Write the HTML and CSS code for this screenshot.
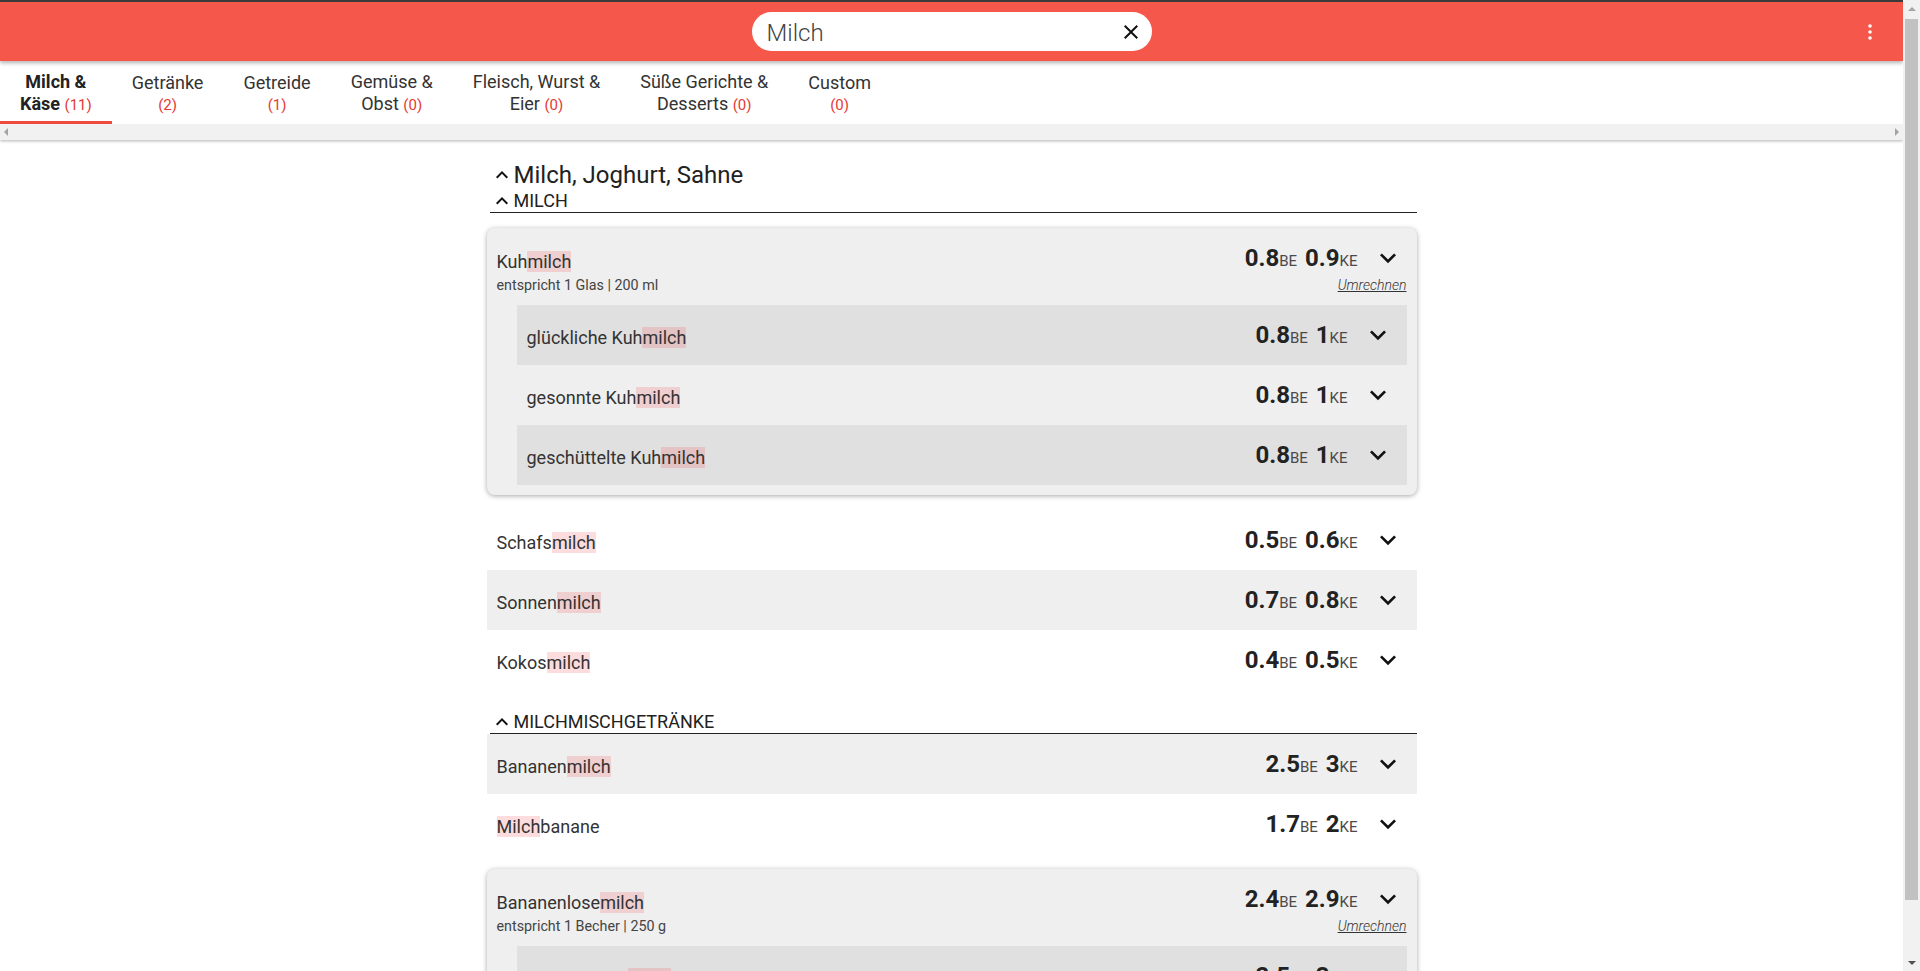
FILE: index.html
```html
<!DOCTYPE html>
<html lang="de">
<head>
<meta charset="utf-8">
<title>BE/KE Rechner</title>
<link rel="stylesheet" href="styles.css">
</head>
<body>
<svg class="sprite" xmlns="http://www.w3.org/2000/svg">
  <symbol id="i-close" viewBox="0 0 24 24"><path d="M19 6.41L17.59 5 12 10.59 6.41 5 5 6.41 10.59 12 5 17.59 6.41 19 12 13.41 17.59 19 19 17.59 13.41 12z"/></symbol>
  <symbol id="i-more" viewBox="0 0 24 24"><circle cx="12" cy="6" r="1.8"/><circle cx="12" cy="12" r="1.8"/><circle cx="12" cy="18" r="1.8"/></symbol>
  <symbol id="i-down" viewBox="0 0 24 24"><path d="M16.59 8.59L12 13.17 7.41 8.59 6 10l6 6 6-6z"/></symbol>
  <symbol id="i-up" viewBox="0 0 24 24"><path d="M12 8l-6 6 1.41 1.41L12 10.83l4.59 4.58L18 14z"/></symbol>
</svg>
<div class="window">
  <div class="app">
    <header class="topbar">
      <div class="search">
        <span class="search-text">Milch</span>
        <svg class="icon-close"><use href="#i-close"/></svg>
      </div>
      <svg class="menu"><use href="#i-more"/></svg>
    </header>

    <nav class="tabs-wrap">
      <div class="tabs">
        <div class="tab active"><span>Milch &amp;</span><span>Käse <span class="count">(11)</span></span></div>
        <div class="tab"><span>Getränke</span><span class="count">(2)</span></div>
        <div class="tab"><span>Getreide</span><span class="count">(1)</span></div>
        <div class="tab"><span>Gemüse &amp;</span><span>Obst <span class="count">(0)</span></span></div>
        <div class="tab"><span>Fleisch, Wurst &amp;</span><span>Eier <span class="count">(0)</span></span></div>
        <div class="tab"><span>Süße Gerichte &amp;</span><span>Desserts <span class="count">(0)</span></span></div>
        <div class="tab"><span>Custom</span><span class="count">(0)</span></div>
      </div>
      <div class="hscroll"><span class="tri-l"></span><span class="tri-r"></span></div>
    </nav>

    <main class="content">
      <div class="list">
        <div class="section-title"><svg class="caret"><use href="#i-up"/></svg><span>Milch, Joghurt, Sahne</span></div>
        <div class="group-title"><svg class="caret"><use href="#i-up"/></svg><span>Milch</span></div>

        <div class="card">
          <div class="card-head">
            <div class="card-name">Kuh<mark class="hl">milch</mark></div>
            <div class="card-right">
              <div class="vals"><span class="val"><span class="num">0.8</span><span class="unit">BE</span></span><span class="val"><span class="num">0.9</span><span class="unit">KE</span></span></div>
              <svg class="chev"><use href="#i-down"/></svg>
            </div>
            <div class="desc">entspricht 1 Glas | 200 ml</div>
            <div class="convert">Umrechnen</div>
          </div>
          <div class="subs">
            <div class="row sub alt"><div class="name">glückliche Kuh<mark class="hl">milch</mark></div><div class="vals"><span class="val"><span class="num">0.8</span><span class="unit">BE</span></span><span class="val"><span class="num">1</span><span class="unit">KE</span></span></div><svg class="chev"><use href="#i-down"/></svg></div>
            <div class="row sub"><div class="name">gesonnte Kuh<mark class="hl">milch</mark></div><div class="vals"><span class="val"><span class="num">0.8</span><span class="unit">BE</span></span><span class="val"><span class="num">1</span><span class="unit">KE</span></span></div><svg class="chev"><use href="#i-down"/></svg></div>
            <div class="row sub alt"><div class="name">geschüttelte Kuh<mark class="hl">milch</mark></div><div class="vals"><span class="val"><span class="num">0.8</span><span class="unit">BE</span></span><span class="val"><span class="num">1</span><span class="unit">KE</span></span></div><svg class="chev"><use href="#i-down"/></svg></div>
          </div>
        </div>

        <div class="row"><div class="name">Schafs<mark class="hl">milch</mark></div><div class="vals"><span class="val"><span class="num">0.5</span><span class="unit">BE</span></span><span class="val"><span class="num">0.6</span><span class="unit">KE</span></span></div><svg class="chev"><use href="#i-down"/></svg></div>
        <div class="row alt"><div class="name">Sonnen<mark class="hl">milch</mark></div><div class="vals"><span class="val"><span class="num">0.7</span><span class="unit">BE</span></span><span class="val"><span class="num">0.8</span><span class="unit">KE</span></span></div><svg class="chev"><use href="#i-down"/></svg></div>
        <div class="row"><div class="name">Kokos<mark class="hl">milch</mark></div><div class="vals"><span class="val"><span class="num">0.4</span><span class="unit">BE</span></span><span class="val"><span class="num">0.5</span><span class="unit">KE</span></span></div><svg class="chev"><use href="#i-down"/></svg></div>

        <div class="group-title spaced"><svg class="caret"><use href="#i-up"/></svg><span>Milchmischgetränke</span></div>

        <div class="row alt"><div class="name">Bananen<mark class="hl">milch</mark></div><div class="vals"><span class="val"><span class="num">2.5</span><span class="unit">BE</span></span><span class="val"><span class="num">3</span><span class="unit">KE</span></span></div><svg class="chev"><use href="#i-down"/></svg></div>
        <div class="row"><div class="name"><mark class="hl">Milch</mark>banane</div><div class="vals"><span class="val"><span class="num">1.7</span><span class="unit">BE</span></span><span class="val"><span class="num">2</span><span class="unit">KE</span></span></div><svg class="chev"><use href="#i-down"/></svg></div>

        <div class="card">
          <div class="card-head">
            <div class="card-name">Bananenlose<mark class="hl">milch</mark></div>
            <div class="card-right">
              <div class="vals"><span class="val"><span class="num">2.4</span><span class="unit">BE</span></span><span class="val"><span class="num">2.9</span><span class="unit">KE</span></span></div>
              <svg class="chev"><use href="#i-down"/></svg>
            </div>
            <div class="desc">entspricht 1 Becher | 250 g</div>
            <div class="convert">Umrechnen</div>
          </div>
          <div class="subs">
            <div class="row sub alt"><div class="name">Bio-Bananen<mark class="hl">milch</mark></div><div class="vals"><span class="val"><span class="num">2.5</span><span class="unit">BE</span></span><span class="val"><span class="num">3</span><span class="unit">KE</span></span></div><svg class="chev"><use href="#i-down"/></svg></div>
            <div class="row sub"><div class="name">leichte Bananenlose<mark class="hl">milch</mark></div><div class="vals"><span class="val"><span class="num">2.2</span><span class="unit">BE</span></span><span class="val"><span class="num">2.6</span><span class="unit">KE</span></span></div><svg class="chev"><use href="#i-down"/></svg></div>
          </div>
        </div>
      </div>
    </main>
  </div>

  <div class="vscroll">
    <div class="vs-btn"><span class="tri-up"></span></div>
    <div class="vs-thumb"></div>
    <div class="vs-space"></div>
    <div class="vs-btn"><span class="tri-down"></span></div>
  </div>
</div>
</body>
</html>
```

FILE: styles.css
```css
* { box-sizing: border-box; }

html, body {
  margin: 0;
  height: 100%;
  overflow: hidden;
}

body {
  font-family: Roboto, "Noto Sans", "Liberation Sans", sans-serif;
  color: #222;
  background: #fff;
}

.sprite {
  display: block;
  width: 0;
  height: 0;
  overflow: hidden;
}

.window {
  display: flex;
  height: 100vh;
}

.app {
  flex: 1;
  min-width: 0;
  display: flex;
  flex-direction: column;
  overflow: hidden;
}

/* ---------- top bar ---------- */
.topbar {
  flex: none;
  height: 61px;
  border-top: 2px solid #3a3a3a;
  background: #f5574b;
  display: grid;
  grid-template-columns: 1fr 400px 1fr;
  align-items: center;
  box-shadow: 0 2px 4px rgba(0, 0, 0, 0.3);
  position: relative;
  z-index: 2;
}

.search {
  grid-column: 2;
  height: 39px;
  border-radius: 20px;
  background: #fff;
  display: flex;
  align-items: center;
  padding: 2px 9px 0 15px;
}

.search-text {
  flex: 1;
  font-size: 24px;
  font-weight: 300;
  color: #444;
}

.icon-close {
  width: 24px;
  height: 24px;
  margin-top: -2px;
  fill: #111;
}

.menu {
  grid-column: 3;
  justify-self: end;
  margin-right: 21px;
  width: 24px;
  height: 24px;
  fill: #fff;
}

/* ---------- tabs ---------- */
.tabs-wrap {
  flex: none;
  box-shadow: 0 1px 3px rgba(0, 0, 0, 0.3);
  position: relative;
  z-index: 1;
}

.tabs {
  display: flex;
  height: 63px;
  background: #fff;
}

.tab {
  display: flex;
  flex-direction: column;
  justify-content: center;
  align-items: center;
  padding: 2px 20px 0;
  text-align: center;
  font-size: 18px;
  line-height: 22px;
  color: #333;
  white-space: nowrap;
}

.tab.active {
  font-weight: 700;
  color: #222;
  box-shadow: inset 0 -3px 0 #ef4a3e;
}

.count {
  font-size: 15px;
  font-weight: 400;
  color: #e53935;
}

.hscroll {
  height: 16px;
  background: #f1f1f1;
  display: flex;
  justify-content: space-between;
  align-items: center;
  padding: 0 4px;
}

.tri-l {
  border-top: 4px solid transparent;
  border-bottom: 4px solid transparent;
  border-right: 4px solid #a3a3a3;
}

.tri-r {
  border-top: 4px solid transparent;
  border-bottom: 4px solid transparent;
  border-left: 4px solid #a3a3a3;
}

/* ---------- content ---------- */
.content {
  flex: 1;
  overflow: hidden;
  padding-top: 21px;
}

.list {
  width: 930px;
  margin: 0 auto;
}

.section-title {
  display: flex;
  align-items: center;
  height: 28px;
  padding-left: 3px;
  font-size: 24px;
  color: #212121;
}

.caret {
  flex: none;
  width: 24px;
  height: 24px;
  fill: #111;
}

.group-title {
  display: flex;
  align-items: center;
  height: 24px;
  margin-left: 3px;
  border-bottom: 1px solid #222;
  font-size: 18px;
  text-transform: uppercase;
  color: #212121;
}

.group-title.spaced {
  margin-top: 20px;
}

.row {
  display: flex;
  align-items: center;
  height: 60px;
  padding: 0 13px 0 10px;
  font-size: 18px;
  color: #333;
}

.row.alt {
  background: #efefef;
}

.name {
  flex: 1;
  padding-top: 5px;
}

.hl {
  background: rgba(240, 80, 80, 0.2);
  color: inherit;
}

.vals {
  display: flex;
  align-items: baseline;
}

.val + .val {
  margin-left: 8px;
}

.num {
  font-size: 24px;
  font-weight: 700;
  color: #222;
}

.unit {
  font-size: 15px;
  color: #4a4a4a;
}

.chev {
  flex: none;
  width: 32px;
  height: 32px;
  margin-left: 14px;
  fill: #111;
}

/* ---------- expanded card ---------- */
.card {
  background: #efefef;
  border-radius: 8px;
  box-shadow: 0 1px 5px rgba(0, 0, 0, 0.35);
  margin: 15px 0;
  padding: 16px 0 10px;
}

.card-head {
  display: grid;
  grid-template-columns: 1fr auto;
  padding: 0 13px 0 10px;
}

.card-name {
  font-size: 18px;
  color: #333;
  align-self: center;
  padding-top: 4px;
}

.card-right {
  display: flex;
  align-items: center;
  justify-self: end;
  height: 32px;
  margin-top: -2px;
}

.desc {
  font-size: 14.3px;
  line-height: 18px;
  padding-top: 2px;
  color: #444;
}

.convert {
  justify-self: end;
  margin-right: -3px;
  padding-top: 2px;
  font-size: 14px;
  line-height: 18px;
  font-style: italic;
  font-weight: 300;
  text-decoration: underline;
  color: #333;
}

.subs {
  margin: 11px 10px 0 30px;
}

.row.sub {
  background: transparent;
}

.row.sub.alt {
  background: #e0e0e0;
}

/* ---------- page scrollbar ---------- */
.vscroll {
  flex: none;
  width: 17px;
  background: #f1f1f1;
  display: flex;
  flex-direction: column;
}

.vs-btn {
  height: 17px;
  display: flex;
  align-items: center;
  justify-content: center;
}

.tri-up {
  border-left: 4px solid transparent;
  border-right: 4px solid transparent;
  border-bottom: 4px solid #a3a3a3;
}

.tri-down {
  border-left: 4px solid transparent;
  border-right: 4px solid transparent;
  border-top: 4px solid #505050;
}

.vs-thumb {
  height: 881px;
  margin: 2px 2px 0;
  background: #c1c1c1;
}

.vs-space {
  flex: 1;
}
```
